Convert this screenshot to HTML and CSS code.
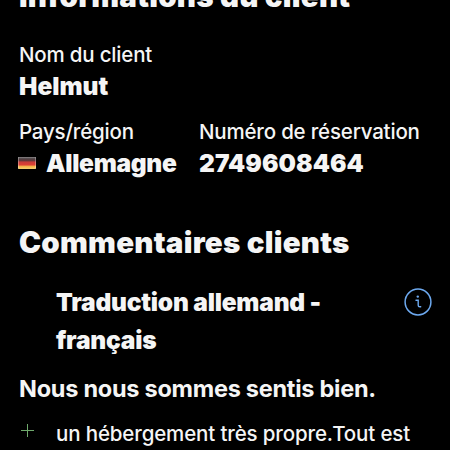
FILE: index.html
```html
<!DOCTYPE html>
<html lang="fr">
<head>
<meta charset="utf-8">
<title>Informations du client</title>
<link rel="stylesheet" href="styles.css">
</head>
<body>
<main class="page">
  <section class="guest">
    <h2 class="title title-info">Informations du client</h2>
    <dl class="field name">
      <dt class="label">Nom du client</dt>
      <dd class="value">Helmut</dd>
    </dl>
    <div class="columns">
      <dl class="field">
        <dt class="label">Pays/région</dt>
        <dd class="value country"><svg class="flag" viewBox="0 0 18 12"><defs><linearGradient id="flag" x2="0" y2="1"><stop offset="0" stop-color="#8d898b"/><stop offset=".15" stop-color="#4b4043"/><stop offset=".3" stop-color="#64383a"/><stop offset=".42" stop-color="#c93c38"/><stop offset=".65" stop-color="#dd4034"/><stop offset=".8" stop-color="#f6b94b"/><stop offset="1" stop-color="#f4ce72"/></linearGradient></defs><rect width="18" height="12" rx="1" fill="url(#flag)"/><path d="M.5 0v12M17.5 0v12" stroke="#fff" stroke-opacity=".3"/></svg><span class="country-name">Allemagne</span></dd>
      </dl>
      <dl class="field">
        <dt class="label">Numéro de réservation</dt>
        <dd class="value booking">2749608464</dd>
      </dl>
    </div>
  </section>
  <section class="comments">
    <h2 class="title">Commentaires clients</h2>
    <div class="translation">
      <h3 class="value translation-text">Traduction allemand -<br>français</h3>
      <svg class="info" viewBox="0 0 28 28" fill="none" stroke="#6da9ef"><circle cx="14" cy="14" r="12.9" stroke-width="1.5"/><path d="M12 12.2h2.2v5q0 1.6 1.6 1.6h.9" stroke-width="1.4" stroke-linecap="round"/><circle cx="13.8" cy="8.6" r="1.2" fill="#6da9ef" stroke="none"/></svg>
    </div>
    <p class="summary">Nous nous sommes sentis bien.</p>
    <div class="positive">
      <svg class="plus" viewBox="0 0 14 14"><path d="M6.5 0v13M0 6.5h13" stroke="#6fa96c" stroke-width="1"/></svg>
      <p class="review">un hébergement très propre.Tout est</p>
    </div>
  </section>
</main>
</body>
</html>
```
FILE: styles.css
```css
* { box-sizing: border-box; margin: 0; }
body { background: #000; color: #f5f5f5; font-family: Inter, "Liberation Sans", sans-serif; overflow: hidden; height: 450px; }
.page { padding: 0 18px 0 19px; white-space: nowrap; height: 450px; overflow: hidden; }
.title { font-size: 29.5px; line-height: 36px; font-weight: 900; letter-spacing: 0.25px; }
.title-info { margin-top: -22px; }
.label { font-size: 20.5px; line-height: 28px; font-weight: 450; letter-spacing: -0.19px; }
.value { font-size: 24.5px; line-height: 34px; font-weight: 900; }
.name { margin-top: 27px; }
.columns { display: grid; grid-template-columns: 180px 1fr; margin-top: 15px; }
.country { display: flex; align-items: center; gap: 11px; letter-spacing: -0.3px; }
.flag { width: 18px; height: 12px; margin: 0 0 1px -1px; }
.country-name { margin-left: -1px; }
.booking { letter-spacing: 0.05px; }
.comments { margin-top: 44px; }
.translation { display: flex; justify-content: space-between; margin-top: 23px; padding-left: 37px; }
.translation-text { line-height: 38px; letter-spacing: -0.22px; }
.info { width: 28px; height: 28px; margin-top: 5px; }
.summary { font-size: 23.5px; line-height: 34px; font-weight: 650; margin-top: 13px; letter-spacing: -0.26px; }
.positive { display: flex; margin-top: 11px; }
.plus { flex: none; width: 14px; height: 14px; margin: 7px 20px 0 2px; }
.review { font-size: 20.5px; line-height: 34px; font-weight: 500; letter-spacing: -0.14px; margin-left: 1px; }
```
